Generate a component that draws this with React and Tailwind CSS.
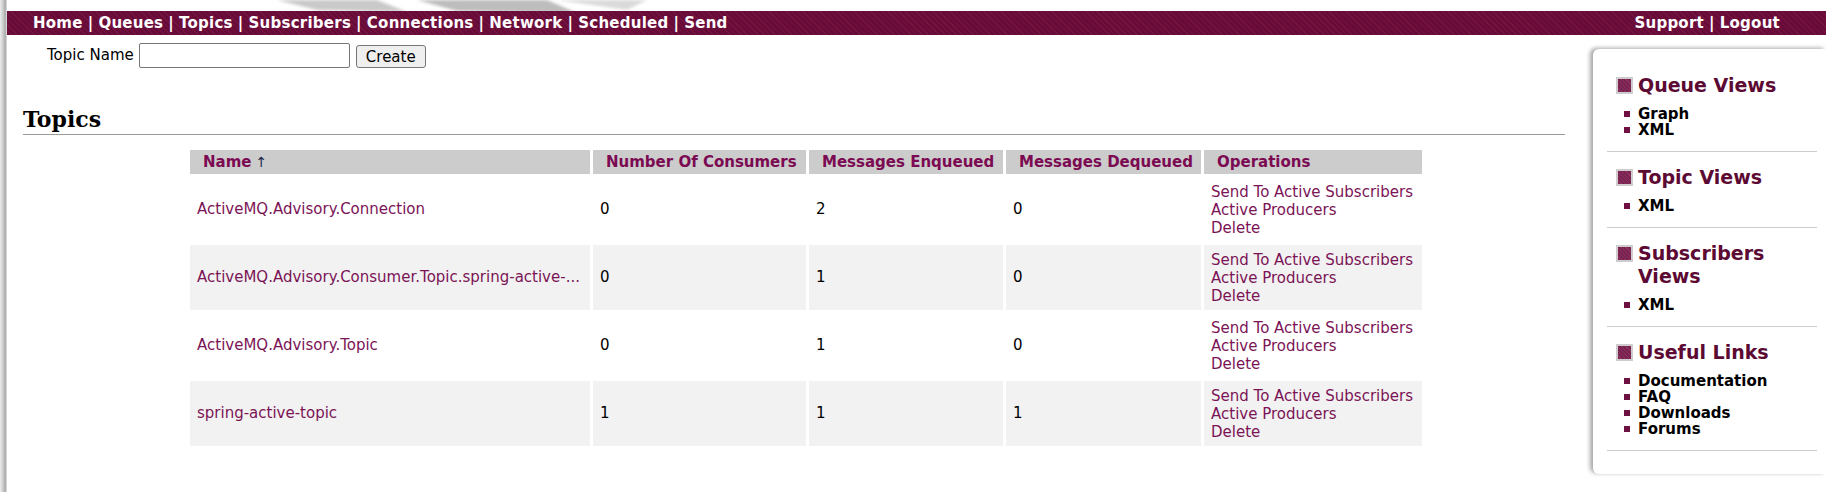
import React from "react";

const navLeft = ["Home", "Queues", "Topics", "Subscribers", "Connections", "Network", "Scheduled", "Send"];

const topics = [
  { name: "ActiveMQ.Advisory.Connection", consumers: 0, enq: 2, deq: 0 },
  { name: "ActiveMQ.Advisory.Consumer.Topic.spring-active-...", consumers: 0, enq: 1, deq: 0 },
  { name: "ActiveMQ.Advisory.Topic", consumers: 0, enq: 1, deq: 0 },
  { name: "spring-active-topic", consumers: 1, enq: 1, deq: 1 },
];

const sections = [
  { title: "Queue Views", items: ["Graph", "XML"] },
  { title: "Topic Views", items: ["XML"] },
  { title: "Subscribers Views", items: ["XML"] },
  { title: "Useful Links", items: ["Documentation", "FAQ", "Downloads", "Forums"] },
];

function NavLinks({ items }) {
  return (
    <div className="flex items-center">
      {items.map((item, i) => (
        <span key={item} className="flex items-center">
          {i > 0 && <span className="px-[5px]">|</span>}
          <a href="#" className="text-white">{item}</a>
        </span>
      ))}
    </div>
  );
}

function SideSection({ title, items, first }) {
  return (
    <div className={first ? "pt-[25px]" : "pt-[14px]"}>
      <div className="flex items-start">
        <div className="mt-[3px] ml-[23px] w-[17px] h-[17px] shrink-0 border-2 border-[#d0cccd] bg-[repeating-linear-gradient(45deg,#7a2350_0px,#7a2350_2px,#8a3360_2px,#8a3360_3px)]" />
        <h3 className="ml-[5px] text-[19px] leading-[23px] font-bold text-[#5c0a33] pr-[10px]">
          {title}
        </h3>
      </div>
      <ul className="mt-[9px] mb-[13px]">
        {items.map((it) => (
          <li key={it} className="flex items-center h-[16px] leading-[16px]">
            <span className="ml-[31px] w-[6px] h-[6px] bg-[#6e1040]" />
            <a href="#" className="ml-[8px] text-[15px] font-bold text-black">{it}</a>
          </li>
        ))}
      </ul>
      <div className="ml-[14px] mr-[9px] h-px bg-[#cccccc]" />
    </div>
  );
}

export default function App() {
  return (
    <div
      className="relative flex w-full h-[492px] bg-white overflow-hidden text-[15px] text-black"
      style={{ fontFamily: '"DejaVu Sans", Verdana, sans-serif' }}
    >
      {/* left edge shade */}
      <div className="w-[7px] shrink-0 bg-[linear-gradient(to_right,#ececec,#cfcfcf_40%,#a9a9a9_75%,#e6e6e6)]" />

      <div className="relative flex-1 flex flex-col">
        {/* faded header artwork */}
        <svg className="absolute left-[240px] top-0" width="420" height="14" viewBox="0 0 420 14">
          <defs>
            <filter id="blur"><feGaussianBlur stdDeviation="1.5" /></filter>
          </defs>
          <g filter="url(#blur)" fill="#c9c9c9">
            <path d="M30 0 L130 0 L160 12 L70 10 Z" />
            <path d="M170 0 L300 0 L330 13 L210 11 Z" fill="#bdbdbd" />
            <path d="M310 0 L400 0 L380 10 Z" fill="#dadada" />
          </g>
        </svg>
        <div className="h-[12px]" />

        {/* nav bar */}
        <div className="relative h-[25px] flex items-center justify-between pl-[26px] pr-[46px] text-white font-bold text-[15px] tracking-[0.25px] bg-[repeating-linear-gradient(45deg,#690b39_0px,#690b39_3px,#74143f_3px,#74143f_4px)]">
          <NavLinks items={navLeft} />
          <NavLinks items={["Support", "Logout"]} />
        </div>

        <div className="flex flex-1">
          {/* main */}
          <div className="flex-1 pl-[16px] pr-[28px]">
            <form className="mt-[8px] ml-[24px] flex items-center h-[25px]" onSubmit={(e) => e.preventDefault()}>
              <label className="text-[15px]">Topic Name</label>
              <input className="ml-[5px] w-[211px] h-[25px] border border-[#767676] rounded-[2px] bg-white" />
              <button className="ml-[6px] w-[70px] h-[23px] mt-[2px] border border-[#767676] rounded-[3px] bg-[#efefef] text-[15px]">
                Create
              </button>
            </form>

            <h2
              className="mt-[37px] h-[30px] leading-[28px] text-[22px] font-bold border-b border-[#9a9a9a]"
              style={{ fontFamily: '"DejaVu Serif", "Liberation Serif", serif' }}
            >
              Topics
            </h2>

            <div className="mt-[15px] ml-[167px] grid grid-cols-[400px_213px_194px_195px_218px] gap-[3px]">
              <div className="h-[24px] bg-[#cccccc] flex items-center pl-[13px] font-bold text-[#7b0a52]">
                Name <span className="ml-[4px] font-normal text-[#1a2a4a] text-[14px]">↑</span>
              </div>
              {["Number Of Consumers", "Messages Enqueued", "Messages Dequeued", "Operations"].map((h) => (
                <div key={h} className="h-[24px] bg-[#cccccc] flex items-center pl-[13px] font-bold text-[#7b0a52] whitespace-nowrap">
                  {h}
                </div>
              ))}

              {topics.map((t, i) => {
                const bg = i % 2 === 0 ? "bg-white" : "bg-[#f2f2f2]";
                return (
                  <React.Fragment key={t.name}>
                    <div className={`h-[65px] ${bg} flex items-center pl-[7px] whitespace-nowrap overflow-hidden`}>
                      <a href="#" className="text-[#7b1456]">{t.name}</a>
                    </div>
                    <div className={`h-[65px] ${bg} flex items-center pl-[7px]`}>{t.consumers}</div>
                    <div className={`h-[65px] ${bg} flex items-center pl-[7px]`}>{t.enq}</div>
                    <div className={`h-[65px] ${bg} flex items-center pl-[7px]`}>{t.deq}</div>
                    <div className={`h-[65px] ${bg} flex flex-col justify-center pl-[7px] leading-[18px] text-[#7b1456] whitespace-nowrap`}>
                      <a href="#">Send To Active Subscribers</a>
                      <a href="#">Active Producers</a>
                      <a href="#">Delete</a>
                    </div>
                  </React.Fragment>
                );
              })}
            </div>
          </div>

          {/* sidebar */}
          <div className="w-[233px] shrink-0 mt-[14px] mb-[18px] self-start">
            <div className="bg-white rounded-tl-[6px] rounded-bl-[6px] pb-[23px] shadow-[-3px_-1px_4px_rgba(0,0,0,0.35)]">
              {sections.map((s, i) => (
                <SideSection key={s.title} title={s.title} items={s.items} first={i === 0} />
              ))}
            </div>
          </div>
        </div>
      </div>
    </div>
  );
}
